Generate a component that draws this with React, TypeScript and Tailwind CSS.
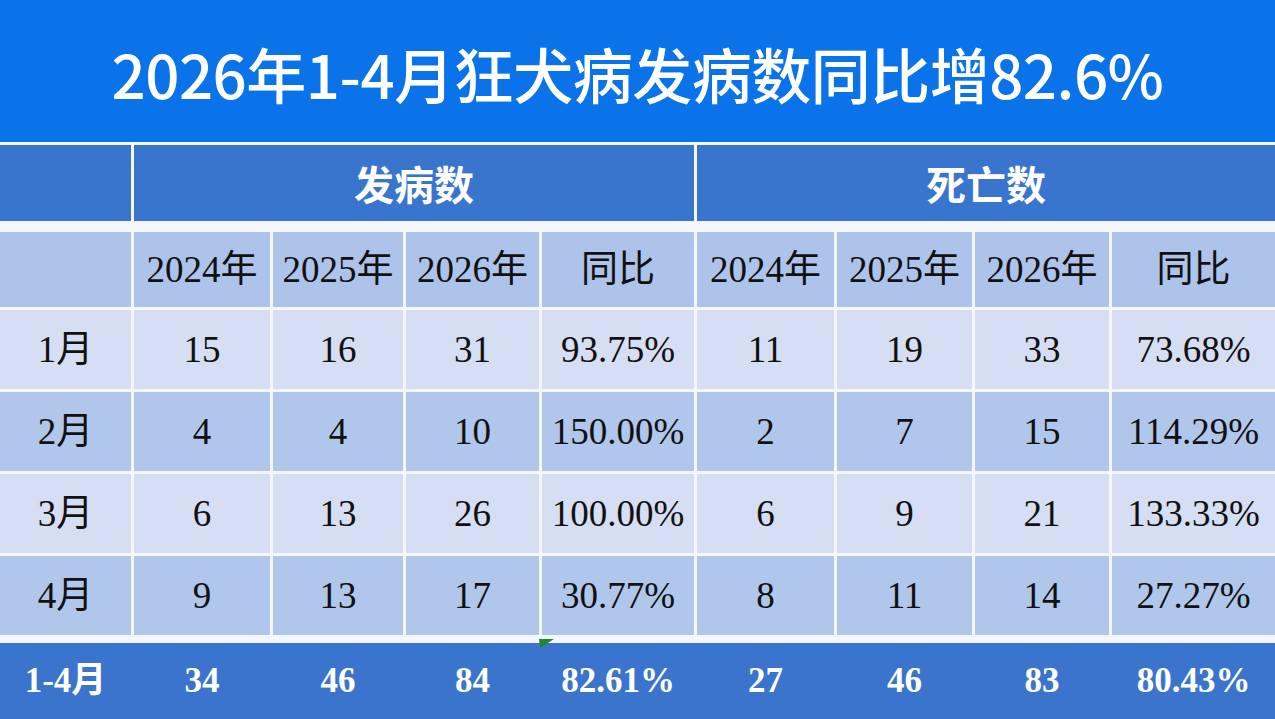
const cols = "grid grid-cols-[131px_136px_130px_133px_152px_137px_135px_134px_1fr] gap-x-[3px]";

const rows = [
    { m: "1月", v: ["15", "16", "31", "93.75%", "11", "19", "33", "73.68%"], light: true },
    { m: "2月", v: ["4", "4", "10", "150.00%", "2", "7", "15", "114.29%"], light: false },
    { m: "3月", v: ["6", "13", "26", "100.00%", "6", "9", "21", "133.33%"], light: true },
    { m: "4月", v: ["9", "13", "17", "30.77%", "8", "11", "14", "27.27%"], light: false },
];

const total = ["34", "46", "84", "82.61%", "27", "46", "83", "80.43%"];
const years = ["2024年", "2025年", "2026年", "同比", "2024年", "2025年", "2026年", "同比"];

const serif = "font-['Liberation_Serif','Noto_Sans_CJK_SC',serif]";

export default function App() {
    return (
        <div className="w-[1275px] h-[719px] bg-[#f4f7fd] flex flex-col overflow-hidden">
            {/* 标题 */}
            <div className="h-[142px] bg-[#0a73e9] flex items-center justify-center">
                <h1 className="text-white text-[60px] font-medium font-['Noto_Sans_CJK_SC',sans-serif] tracking-[-0.5px] mt-[4px]">
                    2026年1-4月狂犬病发病数同比增82.6%
                </h1>
            </div>

            {/* 表头 */}
            <div className={`${cols} mt-[3px] h-[76px]`}>
                <div className="bg-[#3a75cd]" />
                <div className="col-span-4 bg-[#3a75cd] flex items-center justify-center text-white text-[40px] font-bold font-['Noto_Sans_CJK_SC',sans-serif]">
                    发病数
                </div>
                <div className="col-span-4 bg-[#3a75cd] flex items-center justify-center text-white text-[40px] font-bold font-['Noto_Sans_CJK_SC',sans-serif]">
                    死亡数
                </div>
            </div>

            <div className={`${cols} mt-[11px] h-[75px]`}>
                <div className="bg-[#adc3ea]" />
                {years.map((y, i) => (
                    <div key={i} className={`bg-[#adc3ea] flex items-center justify-center text-[#111] text-[37px] ${serif}`}>
                        {y}
                    </div>
                ))}
            </div>

            {/* 月份数据 */}
            {rows.map((r) => (
                <div key={r.m} className={`${cols} mt-[3px] h-[79px]`}>
                    {[r.m, ...r.v].map((v, i) => (
                        <div
                            key={i}
                            className={`${r.light ? "bg-[#d6def3]" : "bg-[#b0c6eb]"} flex items-center justify-center text-[#111] text-[37px] ${serif}`}
                        >
                            {v}
                        </div>
                    ))}
                </div>
            ))}

            {/* 合计 */}
            <div className="mt-[8px] flex-1 bg-[#3a74cd] grid grid-cols-[131px_136px_130px_133px_152px_137px_135px_134px_1fr] gap-x-[3px]">
                {["1-4月", ...total].map((v, i) => (
                    <div key={i} className={`relative flex items-center justify-center text-white text-[35px] font-bold ${serif}`}>
                        {i === 4 && (
                            <svg className="absolute left-[-3px] top-[-4px]" width="15" height="10" viewBox="0 0 15 10">
                                <polygon points="0,0 15,0 1,9" fill="#1c8a2c" />
                            </svg>
                        )}
                        {v}
                    </div>
                ))}
            </div>
        </div>
    );
}
